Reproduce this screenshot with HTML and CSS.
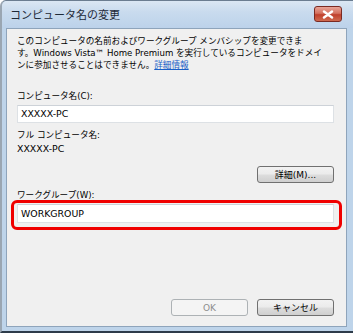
FILE: index.html
```html
<!DOCTYPE html>
<html lang="ja">
<head>
<meta charset="utf-8">
<link rel="stylesheet" href="styles.css">
</head>
<body>
<div class="window">
  <div class="titlebar">
    <span class="title">コンピュータ名の変更</span>
    <span class="close">
      <svg width="12" height="9" viewBox="0 0 12 9"><path d="M2 1.5 L10 7.5 M10 1.5 L2 7.5" stroke="#fff" stroke-width="2.4" stroke-linecap="round"/></svg>
    </span>
  </div>
  <div class="client">
    <p class="intro"><span class="line">このコンピュータの名前およびワークグループ メンバシップを変更できま</span><span class="line">す。Windows Vista™ Home Premium を実行しているコンピュータをドメイ</span><span class="line">ンに参加させることはできません。<a class="link">詳細情報</a></span></p>
    <div class="label first">コンピュータ名(C):</div>
    <div class="input">XXXXX-PC</div>
    <div class="label full">フル コンピュータ名:</div>
    <div class="value">XXXXX-PC</div>
    <div class="row"><span class="btn">詳細(M)...</span></div>
    <div class="label wg">ワークグループ(W):</div>
    <div class="wrap">
      <div class="input">WORKGROUP</div>
      <div class="highlight"></div>
    </div>
    <div class="spacer"></div>
    <div class="row bottom"><span class="btn disabled">OK</span><span class="btn">キャンセル</span></div>
  </div>
</div>
</body>
</html>
```
FILE: styles.css
```css
html, body {
  margin: 0;
  padding: 0;
  background: #ffffff;
}
body {
  width: 353px;
  height: 333px;
  overflow: hidden;
  font-family: "DejaVu Sans", "Noto Sans CJK JP", sans-serif;
}
.window {
  box-sizing: border-box;
  width: 360px;
  height: 333px;
  background: #bed4ea;
  border-left: 2px solid #9aa6b2;
  border-top: 1px solid #6b7d90;
  border-right: 1px solid #3c4c5e;
  border-bottom: 2px solid #2d3b4a;
  border-radius: 6px 6px 0 0;
  display: flex;
  flex-direction: column;
  padding: 0 12px 4px 4px;
}
.titlebar {
  height: 26px;
  flex: none;
  display: flex;
  align-items: center;
  justify-content: space-between;
  margin: 0 -12px 0 -4px;
  padding: 0 9px 1px 8px;
  background: linear-gradient(180deg, #dbe7f3 0%, #c9dbee 40%, #bcd2ea 100%);
  border-radius: 5px 5px 0 0;
}
.title {
  font-family: "Noto Sans CJK JP", sans-serif;
  font-size: 11px;
  color: #1e2a38;
  line-height: 14px;
}
.close {
  width: 26px;
  height: 14px;
  margin-right: 8px;
  border-radius: 3px;
  border: 1px solid #7a2a22;
  background: linear-gradient(180deg, #e8a497 0%, #d4715f 45%, #c0402c 55%, #cf6a4f 100%);
  display: flex;
  align-items: center;
  justify-content: center;
}
.client {
  flex: 1;
  box-sizing: border-box;
  background: #f0f0f0;
  border: 1px solid #8ea4bb;
  padding: 6px 12px 10px 10px;
  display: flex;
  flex-direction: column;
  font-size: 8.6px;
  color: #000;
}
.intro {
  margin: 0;
  line-height: 12px;
}
.line {
  display: block;
  white-space: nowrap;
}
.link {
  color: #1a5fc7;
  text-decoration: underline;
}
.label {
  line-height: 12px;
}
.label.first { margin-top: 19px; }
.input {
  margin-top: 3px;
  height: 18px;
  box-sizing: border-box;
  background: #fff;
  border: 1px solid #dde1e5;
  border-top-color: #cdd2d8;
  padding: 0 3px;
  line-height: 16px;
  font-size: 9.4px;
}
.label.full {
  margin-top: 5px;
  line-height: 14px;
}
.value {
  line-height: 14px;
  font-size: 9.4px;
}
.row {
  display: flex;
  justify-content: flex-end;
  gap: 9px;
}
.row:not(.bottom) { margin-top: 10px; }
.btn {
  width: 77px;
  height: 17px;
  box-sizing: border-box;
  border: 1px solid #707070;
  border-radius: 3px;
  background: linear-gradient(180deg, #f2f2f2 0%, #ebebeb 48%, #dddddd 52%, #cfcfcf 100%);
  display: flex;
  align-items: center;
  justify-content: center;
  font-size: 9px;
  line-height: 12px;
}
.btn.disabled {
  border-color: #adb2b5;
  background: #f4f4f4;
  color: #8d8d8d;
}
.label.wg { margin-top: 6px; }
.wrap {
  position: relative;
}
.highlight {
  position: absolute;
  left: -6px;
  right: -8px;
  top: -1px;
  bottom: -7px;
  border: 3px solid #f00000;
  border-radius: 6px;
}
.wrap .input { height: 19px; line-height: 17px; }
.spacer { flex: 1; }
```
